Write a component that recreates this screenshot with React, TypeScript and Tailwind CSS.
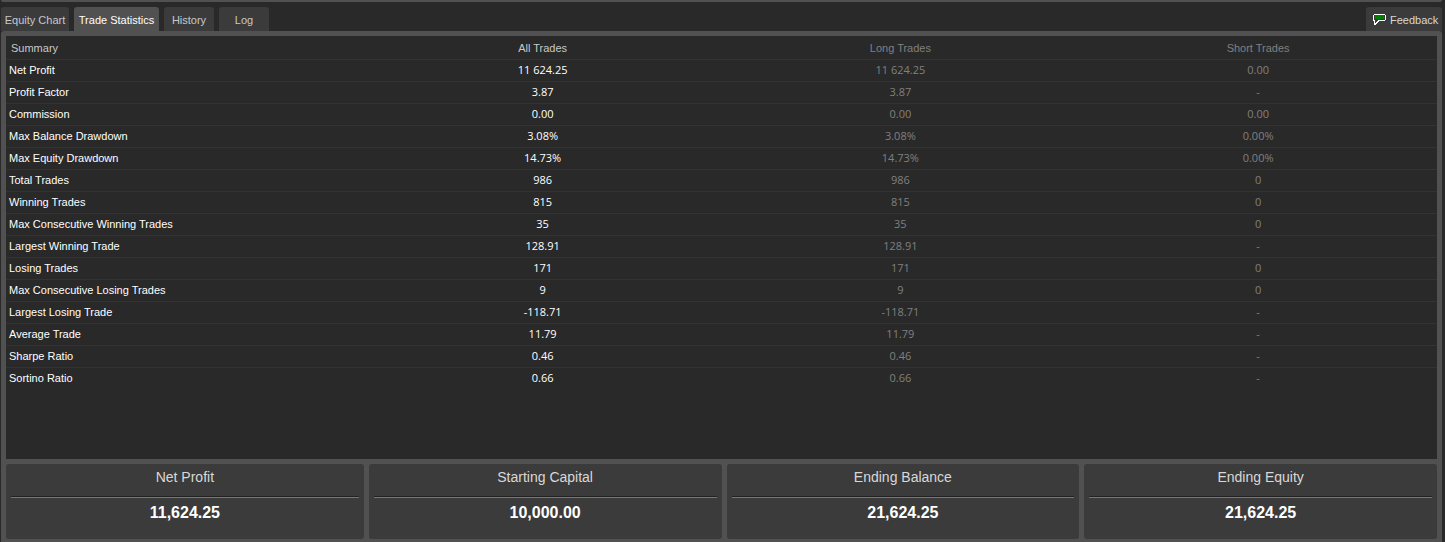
import clsx from "clsx";

interface StatRow {
  label: string;
  all: string;
  long: string;
  short: string;
}

interface TotalProps {
  title: string;
  value: string;
}

const tabs = [
  { name: "Equity Chart", width: "w-[68px]" },
  { name: "Trade Statistics", width: "w-[85px]" },
  { name: "History", width: "w-[50px]" },
  { name: "Log", width: "w-[50px]" },
];

const rows: StatRow[] = [
  { label: "Net Profit", all: "11 624.25", long: "11 624.25", short: "0.00" },
  { label: "Profit Factor", all: "3.87", long: "3.87", short: "-" },
  { label: "Commission", all: "0.00", long: "0.00", short: "0.00" },
  { label: "Max Balance Drawdown", all: "3.08%", long: "3.08%", short: "0.00%" },
  { label: "Max Equity Drawdown", all: "14.73%", long: "14.73%", short: "0.00%" },
  { label: "Total Trades", all: "986", long: "986", short: "0" },
  { label: "Winning Trades", all: "815", long: "815", short: "0" },
  { label: "Max Consecutive Winning Trades", all: "35", long: "35", short: "0" },
  { label: "Largest Winning Trade", all: "128.91", long: "128.91", short: "-" },
  { label: "Losing Trades", all: "171", long: "171", short: "0" },
  { label: "Max Consecutive Losing Trades", all: "9", long: "9", short: "0" },
  { label: "Largest Losing Trade", all: "-118.71", long: "-118.71", short: "-" },
  { label: "Average Trade", all: "11.79", long: "11.79", short: "-" },
  { label: "Sharpe Ratio", all: "0.46", long: "0.46", short: "-" },
  { label: "Sortino Ratio", all: "0.66", long: "0.66", short: "-" },
];

const totals: TotalProps[] = [
  { title: "Net Profit", value: "11,624.25" },
  { title: "Starting Capital", value: "10,000.00" },
  { title: "Ending Balance", value: "21,624.25" },
  { title: "Ending Equity", value: "21,624.25" },
];

function FeedbackIcon() {
  return (
    <svg width="13" height="12" viewBox="0 0 13 12" aria-hidden="true" shapeRendering="crispEdges">
      <path d="M1 0h11v1h1v5h-1v1H6v1H5v1H4v1H3v1H1V7H0V1h1z" fill="#fff" />
      <path d="M2 1h8v4H2z" fill="#008000" />
      <path d="M10 1h1v4h-1z" fill="#e01010" />
      <path d="M1 1h1v5H1zM11 1h1v5h-1zM2 5h9v1H2zM2 6h3v1H4v1H3v1H2z" fill="#3b3b3b" />
    </svg>
  );
}

function TabBar() {
  return (
    <div className="flex h-6 items-stretch justify-between">
      <div role="tablist" className="flex gap-[5px]">
        {tabs.map((tab) => {
          const active = tab.name === "Trade Statistics";
          return (
            <button
              key={tab.name}
              type="button"
              role="tab"
              aria-selected={active}
              className={clsx(
                "rounded-t-[3px] pt-0.5 whitespace-nowrap",
                tab.width,
                active ? "bg-[#515151] text-white" : "bg-[#3b3b3b] text-[#c8c8c8]"
              )}
            >
              {tab.name}
            </button>
          );
        })}
      </div>
      <button
        type="button"
        className="flex w-[76px] items-center gap-1 rounded-t-[3px] bg-[#3b3b3b] pl-[7px] pt-0.5 text-[#d8d8d8]"
      >
        <FeedbackIcon />
        Feedback
      </button>
    </div>
  );
}

function StatsTable() {
  return (
    <table className="w-full table-fixed border-collapse">
      <thead>
        <tr className="h-[23px] border-b border-[#333333] text-[#c8c8c8]">
          <th scope="col" className="p-0 pt-px pl-[5px] text-left font-normal">
            Summary
          </th>
          <th scope="col" className="p-0 pt-px font-normal">
            All Trades
          </th>
          <th scope="col" className="p-0 pt-px font-normal text-[#808080]">
            Long Trades
          </th>
          <th scope="col" className="p-0 pt-px font-normal text-[#808080]">
            Short Trades
          </th>
        </tr>
      </thead>
      <tbody>
        {rows.map((row) => (
          <tr
            key={row.label}
            className="h-[22px] border-b border-[#333333] text-center font-['Open_Sans','Noto_Sans',sans-serif] text-[#808080] last:border-b-0"
          >
            <th
              scope="row"
              className="p-0 pl-[3px] text-left font-['Liberation_Sans',Arial,sans-serif] font-normal text-white"
            >
              {row.label}
            </th>
            <td className="p-0 text-white">{row.all}</td>
            <td className="p-0">{row.long}</td>
            <td className="p-0">{row.short}</td>
          </tr>
        ))}
      </tbody>
    </table>
  );
}

function TotalCard({ title, value }: TotalProps) {
  return (
    <div className="pl-[5px] first:pl-0">
      <div className="h-[75px] rounded-[3px] bg-[#3b3b3b] px-[5px] text-center">
        <h2 className="h-8 pt-[3px] text-sm text-[#d8d8d8]">{title}</h2>
        <div className="h-0.5 border-t border-b border-t-[#222222] border-b-[#777777]" />
        <p className="pt-[3px] text-base font-bold text-white">{value}</p>
      </div>
    </div>
  );
}

export default function App() {
  return (
    <main className="flex min-h-screen flex-col bg-[#292929] pr-[3px] pl-px font-['Liberation_Sans',Arial,sans-serif] text-[11px] leading-4">
      <div className="mb-[5px] h-0.5 rounded-b-[3px] bg-[#515151]" />
      <TabBar />
      <section className="flex grow flex-col rounded-t-[3px] bg-[#515151] px-[5px] pt-[5px] pb-[3px]">
        <div className="grow bg-[#292929]">
          <StatsTable />
        </div>
        <div className="mt-[5px] grid grid-cols-4">
          {totals.map((total) => (
            <TotalCard key={total.title} title={total.title} value={total.value} />
          ))}
        </div>
      </section>
    </main>
  );
}
